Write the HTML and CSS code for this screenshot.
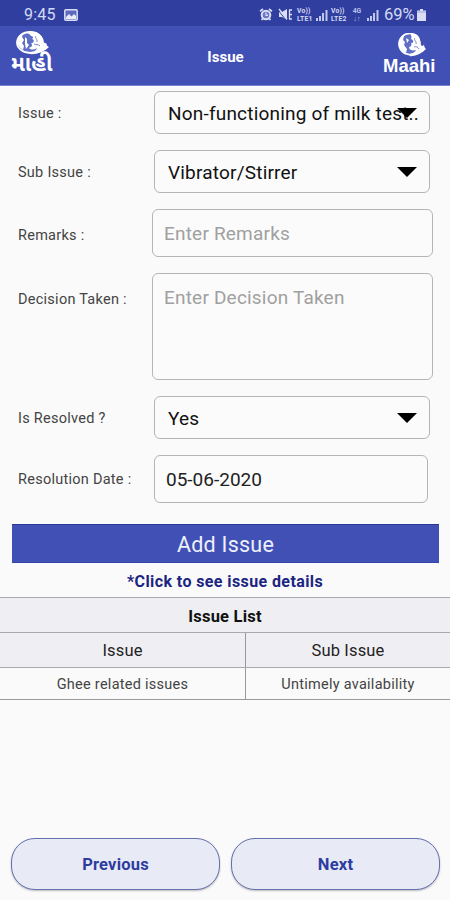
FILE: index.html
```html
<!DOCTYPE html>
<html lang="en">
<head>
<meta charset="utf-8">
<title>Issue</title>
<link rel="stylesheet" href="styles.css">
</head>
<body>
<div class="status">
  <span class="time">9:45</span>
  <svg class="photo" width="14" height="12" viewBox="0 0 14 12"><rect x=".8" y=".8" width="12.4" height="10.4" rx="1" fill="#5c69bd" stroke="#d9def6" stroke-width="1.5"/><path d="M2 10V8l3-3 2.5 2.5L10 5l2 2v3z" fill="#e8ebfa"/></svg>
  <svg class="alarm" width="14" height="13" viewBox="0 0 14 13" fill="none" stroke="#d9def6"><circle cx="7" cy="7" r="4.3" stroke-width="2" fill="#6b78c8"/><path d="M1 3.4 4 1M13 3.4 10 1M3.8 10.5 2.5 12M10.2 10.5 11.5 12" stroke-width="1.7"/><path d="M7 4.5V7.3H9" stroke-width="1.2"/></svg>
  <svg class="mute" width="15" height="13" viewBox="0 0 15 13"><path d="M1 4H4L9 1V12L4 9H1z" fill="#d9def6"/><path d="M0 2 8 12" stroke="#303f9f" stroke-width="1"/><path d="M1 1 9 11M11 2h3M11 6.5h3M11 11h3M11.5 2v9" stroke="#d9def6" fill="none" stroke-width="1.3"/></svg>
  <span class="volte"><b>Vo))</b><b>LTE1</b></span>
  <svg class="bars" width="12" height="12" viewBox="0 0 12 12"><path d="M0 9h2v3H0zM3 7h2v5H3zM6 4h2v8H6zM9.5 1h2v11h-2z" fill="#bfc7ee"/></svg>
  <span class="volte"><b>Vo))</b><b>LTE2</b></span>
  <span class="net"><b>4G</b><b>↓↑</b></span>
  <svg class="bars" width="12" height="12" viewBox="0 0 12 12"><path d="M0 9h2v3H0zM3 7h2v5H3zM6 4h2v8H6zM9.5 1h2v11h-2z" fill="#bfc7ee"/></svg>
  <span class="pct">69%</span>
  <svg class="battery" width="9" height="12" viewBox="0 0 9 12"><path d="M3 0h3v1.5h3V12H0V1.5h3z" fill="#d9def6"/><path d="M0 3h9" stroke="#9ba6dc"/></svg>
</div>
<header class="appbar">
  <div class="logo guj">
    <svg width="34" height="25" viewBox="0 0 34 25"><ellipse cx="14" cy="11.5" rx="13" ry="10.5" fill="#5f6fc6" stroke="#fff" stroke-width="1.8"/><path d="M11 1C21-1 27 4 27 11L31 13C30 14 31 15 33 16C29 20 22 24 13 23C17 22 20 20 21 17C18 19 15 19 13 17C16 16 17 14 15 12C18 12 19 9 16 8C18 7 17 5 15 5C14 3 12 3 11 1Z" fill="#fff"/><path d="M1 9C2 5 4 3 7 2L6 6L8 9L6 12L8 15L7 19C4 17 1 14 1 9ZM9 6L11 8V12L13 14L10 18L9 13Z" fill="#fff"/><path d="M20 5C18 7 22 8 21 11M18 13C20 14 22 13 24 15" fill="none" stroke="#7986d0" stroke-width="1"/></svg>
    <span>માહી</span>
  </div>
  <h1>Issue</h1>
  <div class="logo eng">
    <svg width="28" height="25" viewBox="0 0 28 25"><circle cx="11.5" cy="11" r="10.5" fill="#5f6fc6" stroke="#fff" stroke-width="1.7"/><path d="M13 1C19-1 23 5 22 11L24 13C25 13 26 12 26 11C26 14 27 15 28 16C24 20 18 24 10 23C14 22 17 20 18 17C14 18 11 17 11 14C13 14 14 12 13 10C16 10 16 7 13 6C14 4 13 3 13 1Z" fill="#fff"/><path d="M1 9C2 5 4 3 6 3L5 7L7 9L6 12L9 16L8 20C4 18 0 14 1 9ZM8 5L11 7L9 10Z" fill="#fff"/><path d="M17 5C15 7 19 8 18 11M16 14C18 13 20 14 21 16" fill="none" stroke="#7986d0" stroke-width="1"/></svg>
    <span>Maahi</span>
  </div>
</header>
<main>
  <div class="row r1"><label>Issue :</label><div class="field select"><span>Non-functioning of milk test..</span><i class="arrow"></i></div></div>
  <div class="row r2"><label>Sub Issue :</label><div class="field select"><span>Vibrator/Stirrer</span><i class="arrow"></i></div></div>
  <div class="row r3"><label>Remarks :</label><div class="field input">Enter Remarks</div></div>
  <div class="row r4"><label>Decision Taken :</label><div class="field input area">Enter Decision Taken</div></div>
  <div class="row r5"><label>Is Resolved ?</label><div class="field select"><span>Yes</span><i class="arrow"></i></div></div>
  <div class="row r6"><label>Resolution Date :</label><div class="field date">05-06-2020</div></div>
  <div class="add">Add Issue</div>
  <p class="hint">*Click to see issue details</p>
  <section class="table">
    <div class="title">Issue List</div>
    <div class="cells head"><div>Issue</div><div>Sub Issue</div></div>
    <div class="cells data"><div>Ghee related issues</div><div>Untimely availability</div></div>
  </section>
</main>
<footer><div class="btn">Previous</div><div class="btn">Next</div></footer>
</body>
</html>
```
FILE: styles.css
```css
* { box-sizing: border-box; }
body { margin: 0; width: 450px; height: 900px; overflow: hidden; display: flex; flex-direction: column; background: #fafafa; font-family: Roboto, "Liberation Sans", sans-serif; color: #111; }
.status { height: 26px; flex: none; background: #303f9f; color: #d4daf5; display: flex; align-items: center; padding: 3px 22px 0 24px; }
.time { font-size: 16px; letter-spacing: .2px; width: 32px; }
.photo { margin-left: 8px; }
.alarm { margin-left: 181px; }
.mute { margin-left: 5px; }
.volte { font-size: 6.8px; width: 17px; margin-left: 4px; letter-spacing: .2px; }
.volte b, .net b { display: block; line-height: 8px; height: 8px; }
.bars { margin-left: 2px; flex: none; }
.volte + .bars + .volte { margin-left: 3px; }
.net { font-size: 6.8px; text-align: center; width: 10px; margin-left: 4px; color: #b8c1ea; }
.net + .bars { margin-left: 5px; }
.pct { font-size: 16.5px; width: 32px; margin-left: 5px; }
.battery { margin-left: 1px; flex: none; }
.appbar { height: 60px; flex: none; background: #4050b5; border-bottom: 1px solid #7885d2; display: flex; justify-content: space-between; align-items: flex-start; color: #fff; padding: 6px 13px 0 11px; }
.appbar h1 { margin: 16px 0 0 14px; font-size: 15px; line-height: 18px; font-weight: 700; }
.logo { display: flex; flex-direction: column; }
.logo svg { flex: none; }
.guj { width: 43px; }
.guj svg { margin: -1px 0 0 5px; }
.guj span { font-family: "Noto Sans Gujarati", "Lohit Gujarati", Roboto, sans-serif; font-size: 22px; font-weight: 700; line-height: 22px; margin-top: -1px; white-space: nowrap; }
.eng { width: 54px; }
.eng svg { margin: 1px 0 0 15px; }
.eng span { font-family: "Liberation Sans", sans-serif; font-weight: 700; font-size: 18.5px; line-height: 20px; margin-top: -2px; }
main { flex: 1; }
.row { display: flex; align-items: center; padding-left: 18px; }
.row label { width: 136px; flex: none; font-size: 14.5px; color: #444; letter-spacing: .26px; padding-top: 1px; }
.field { border: 1px solid #b5b5b5; border-radius: 6px; font-size: 19px; display: flex; align-items: center; white-space: nowrap; background: #fbfbfb; }
.select { width: 276px; height: 43px; padding: 1px 12px 0 13px; justify-content: space-between; position: relative; }
.select span { letter-spacing: .2px; }
.arrow { position: absolute; right: 12px; top: 16px; border: 10px solid transparent; border-top: 10px solid #000; border-bottom: 0; }
.r1 { margin-top: 5px; }
.r2 { margin-top: 16px; }
.r3, .r4 { margin-top: 16px; }
.r5 { margin-top: 16px; }
.r6 { margin-top: 16px; }
.r3 label, .r4 label { width: 134px; }
.input { width: 281px; height: 48px; padding: 0 11px; color: #a0a0a0; letter-spacing: .2px; }
.r3 label { padding-top: 4px; }
.r4 { align-items: flex-start; }
.r4 label { padding-top: 18px; }
.area { height: 107px; align-items: flex-start; padding-top: 12px; }
.date { width: 274px; height: 48px; padding: 0 11px; color: #222; letter-spacing: 0; }
.add { margin: 21px 11px 0 12px; height: 39px; background: #4050b5; border-top: 1px solid #2b3898; border-bottom: 1px solid #3443a7; color: #eef0fb; font-size: 21.5px; display: flex; align-items: center; justify-content: center; padding-top: 2px; letter-spacing: .25px; }
.hint { margin: 9px 0 5px; line-height: 20px; text-align: center; font-size: 16px; font-weight: 700; color: #1c2582; letter-spacing: .4px; }
.table { border-top: 1px solid #aaa; text-align: center; }
.title { height: 34px; line-height: 37px; background: #efeef3; font-weight: 700; font-size: 16.5px; letter-spacing: .2px; }
.cells { display: grid; grid-template-columns: 246px 204px; grid-template-rows: 100%; border-top: 1px solid #aaa; }
.cells div:first-child { border-right: 1px solid #999; }
.head { height: 35px; line-height: 36px; background: #efeef3; font-size: 16.5px; color: #222; letter-spacing: .15px; }
.data { height: 33px; line-height: 33px; border-bottom: 1px solid #999; font-size: 14.5px; color: #444; letter-spacing: .26px; }
footer { display: flex; gap: 11px; padding: 0 10px 10px 11px; }
.btn { flex: 1; height: 52px; border: 1.5px solid #6670ad; border-radius: 24px; background: #e8eaf6; color: #2d3c9f; font-size: 16.5px; font-weight: 700; display: flex; align-items: center; justify-content: center; box-shadow: 0 1px 2px #bbb; letter-spacing: .2px; }
```
